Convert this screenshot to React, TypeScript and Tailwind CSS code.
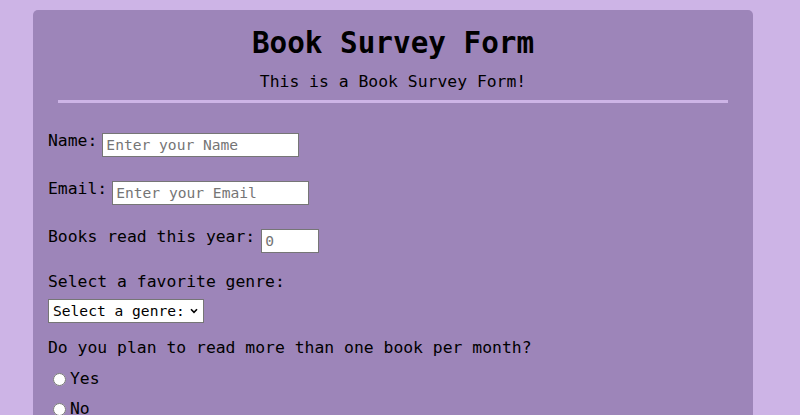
import React from "react";

export default function App() {
  return (
    <div className="h-[415px] w-[800px] overflow-hidden bg-[#cdb4e6] pt-[10px] font-['DejaVu_Sans_Mono','Liberation_Mono',monospace] text-black">
      <div className="ml-[33px] w-[720px] rounded-[5px] bg-[#9d85b9] pt-[16px] pb-[40px]">
        <h1 className="text-center text-[29.3px] font-bold leading-[34px]">Book Survey Form</h1>
        <p className="mt-[11.5px] text-center text-[16.4px] leading-[20px]">This is a Book Survey Form!</p>
        <div className="mx-[25px] mt-[8.5px] h-[3px] bg-[#cdb4e6]" />

        <form className="mt-[27.6px] pl-[15px] text-[16.4px] leading-[20px]">
          <div className="flex items-start">
            <label htmlFor="name">Name:</label>
            <input
              id="name"
              type="text"
              placeholder="Enter your Name"
              className="ml-[5px] mt-[2px] h-[24px] w-[197px] border border-[#767676] bg-white px-[3px] text-[14.6px] leading-[20px] placeholder:text-[#757575]"
            />
          </div>

          <div className="mt-[22px] flex items-start">
            <label htmlFor="email">Email:</label>
            <input
              id="email"
              type="email"
              placeholder="Enter your Email"
              className="ml-[5px] mt-[2px] h-[24px] w-[197px] border border-[#767676] bg-white px-[3px] text-[14.6px] leading-[20px] placeholder:text-[#757575]"
            />
          </div>

          <div className="mt-[22px] flex items-start">
            <label htmlFor="books">Books read this year:</label>
            <input
              id="books"
              type="number"
              placeholder="0"
              className="ml-[6px] mt-[2px] h-[24px] w-[58px] border border-[#767676] bg-white px-[3px] text-[14.6px] leading-[20px] placeholder:text-[#757575]"
            />
          </div>

          <p className="mt-[19px]">Select a favorite genre:</p>
          <div className="relative mt-[7.6px] h-[24px] w-[156px]">
            <select
              defaultValue=""
              className="h-[24px] w-[156px] appearance-none border border-[#767676] bg-white pl-[4px] text-[14.6px] leading-[20px]"
            >
              <option value="" disabled>
                Select a genre:
              </option>
              <option value="fiction">Fiction</option>
              <option value="nonfiction">Non-fiction</option>
              <option value="fantasy">Fantasy</option>
              <option value="mystery">Mystery</option>
            </select>
            <svg
              className="pointer-events-none absolute right-[6px] top-[9px]"
              width="8"
              height="6"
              viewBox="0 0 8 6"
              fill="none"
            >
              <path d="M1 1.2 L4 4.4 L7 1.2" stroke="#000" strokeWidth="1.6" />
            </svg>
          </div>

          <p className="mt-[14.4px]">Do you plan to read more than one book per month?</p>
          <div className="mt-[11px] flex items-start">
            <input
              id="yes"
              type="radio"
              name="plan"
              className="m-0 ml-[5px] mr-[4px] mt-[4px] h-[13px] w-[13px]"
            />
            <label htmlFor="yes">Yes</label>
          </div>
          <div className="mt-[10px] flex items-start">
            <input
              id="no"
              type="radio"
              name="plan"
              className="m-0 ml-[5px] mr-[4px] mt-[4px] h-[13px] w-[13px]"
            />
            <label htmlFor="no">No</label>
          </div>

          <p className="mt-[14px]">Any comments?</p>
          <textarea className="mt-[8px] h-[60px] w-[300px] border border-[#767676] bg-white" />
        </form>
      </div>
    </div>
  );
}
